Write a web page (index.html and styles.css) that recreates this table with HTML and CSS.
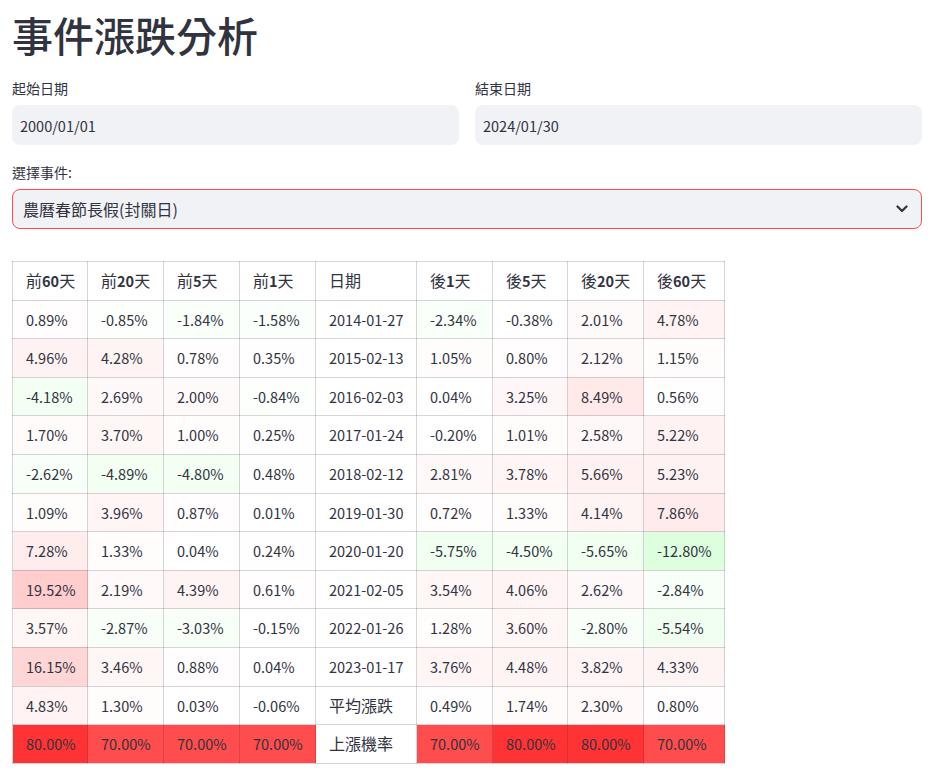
FILE: index.html
```html
<!DOCTYPE html>
<html lang="zh-Hant">
<head>
<meta charset="utf-8">
<title>事件漲跌分析</title>
<link rel="stylesheet" href="styles.css">
</head>
<body>
<main class="page">
  <h1 class="title">事件漲跌分析</h1>
  <div class="dates">
    <div class="field">
      <div class="label">起始日期</div>
      <div class="input"><span class="num">2000/01/01</span></div>
    </div>
    <div class="field">
      <div class="label">結束日期</div>
      <div class="input"><span class="num">2024/01/30</span></div>
    </div>
  </div>
  <div class="field select-field">
    <div class="label">選擇事件:</div>
    <div class="select">
      <span>農曆春節長假(封關日)</span>
      <svg class="chev" width="12" height="8" viewBox="0 0 12 8"><path d="M1.5 1.5 L6 6 L10.5 1.5" fill="none" stroke="#31333f" stroke-width="2.2" stroke-linecap="round" stroke-linejoin="round"/></svg>
    </div>
  </div>
  <table class="grid">
    <thead>
      <tr>
        <th class="w75">前<b>60</b>天</th>
        <th class="w76">前<b>20</b>天</th>
        <th class="w76">前<b>5</b>天</th>
        <th class="w76">前<b>1</b>天</th>
        <th class="w101">日期</th>
        <th class="w76">後<b>1</b>天</th>
        <th class="w75">後<b>5</b>天</th>
        <th class="w76">後<b>20</b>天</th>
        <th class="w81">後<b>60</b>天</th>
      </tr>
    </thead>
    <tbody>
      <tr>
        <td class="p" style="--a:.0089">0.89%</td><td class="n" style="--a:.0085">-0.85%</td><td class="n" style="--a:.0184">-1.84%</td><td class="n" style="--a:.0158">-1.58%</td>
        <td>2014-01-27</td>
        <td class="n" style="--a:.0234">-2.34%</td><td class="n" style="--a:.0038">-0.38%</td><td class="p" style="--a:.0201">2.01%</td><td class="p" style="--a:.0478">4.78%</td>
      </tr>
      <tr>
        <td class="p" style="--a:.0496">4.96%</td><td class="p" style="--a:.0428">4.28%</td><td class="p" style="--a:.0078">0.78%</td><td class="p" style="--a:.0035">0.35%</td>
        <td>2015-02-13</td>
        <td class="p" style="--a:.0105">1.05%</td><td class="p" style="--a:.0080">0.80%</td><td class="p" style="--a:.0212">2.12%</td><td class="p" style="--a:.0115">1.15%</td>
      </tr>
      <tr>
        <td class="n" style="--a:.0418">-4.18%</td><td class="p" style="--a:.0269">2.69%</td><td class="p" style="--a:.0200">2.00%</td><td class="n" style="--a:.0084">-0.84%</td>
        <td>2016-02-03</td>
        <td class="p" style="--a:.0004">0.04%</td><td class="p" style="--a:.0325">3.25%</td><td class="p" style="--a:.0849">8.49%</td><td class="p" style="--a:.0056">0.56%</td>
      </tr>
      <tr>
        <td class="p" style="--a:.0170">1.70%</td><td class="p" style="--a:.0370">3.70%</td><td class="p" style="--a:.0100">1.00%</td><td class="p" style="--a:.0025">0.25%</td>
        <td>2017-01-24</td>
        <td class="n" style="--a:.0020">-0.20%</td><td class="p" style="--a:.0101">1.01%</td><td class="p" style="--a:.0258">2.58%</td><td class="p" style="--a:.0522">5.22%</td>
      </tr>
      <tr>
        <td class="n" style="--a:.0262">-2.62%</td><td class="n" style="--a:.0489">-4.89%</td><td class="n" style="--a:.0480">-4.80%</td><td class="p" style="--a:.0048">0.48%</td>
        <td>2018-02-12</td>
        <td class="p" style="--a:.0281">2.81%</td><td class="p" style="--a:.0378">3.78%</td><td class="p" style="--a:.0566">5.66%</td><td class="p" style="--a:.0523">5.23%</td>
      </tr>
      <tr>
        <td class="p" style="--a:.0109">1.09%</td><td class="p" style="--a:.0396">3.96%</td><td class="p" style="--a:.0087">0.87%</td><td class="p" style="--a:.0001">0.01%</td>
        <td>2019-01-30</td>
        <td class="p" style="--a:.0072">0.72%</td><td class="p" style="--a:.0133">1.33%</td><td class="p" style="--a:.0414">4.14%</td><td class="p" style="--a:.0786">7.86%</td>
      </tr>
      <tr>
        <td class="p" style="--a:.0728">7.28%</td><td class="p" style="--a:.0133">1.33%</td><td class="p" style="--a:.0004">0.04%</td><td class="p" style="--a:.0024">0.24%</td>
        <td>2020-01-20</td>
        <td class="n" style="--a:.0575">-5.75%</td><td class="n" style="--a:.0450">-4.50%</td><td class="n" style="--a:.0565">-5.65%</td><td class="n" style="--a:.1280">-12.80%</td>
      </tr>
      <tr>
        <td class="p" style="--a:.1952">19.52%</td><td class="p" style="--a:.0219">2.19%</td><td class="p" style="--a:.0439">4.39%</td><td class="p" style="--a:.0061">0.61%</td>
        <td>2021-02-05</td>
        <td class="p" style="--a:.0354">3.54%</td><td class="p" style="--a:.0406">4.06%</td><td class="p" style="--a:.0262">2.62%</td><td class="n" style="--a:.0284">-2.84%</td>
      </tr>
      <tr>
        <td class="p" style="--a:.0357">3.57%</td><td class="n" style="--a:.0287">-2.87%</td><td class="n" style="--a:.0303">-3.03%</td><td class="n" style="--a:.0015">-0.15%</td>
        <td>2022-01-26</td>
        <td class="p" style="--a:.0128">1.28%</td><td class="p" style="--a:.0360">3.60%</td><td class="n" style="--a:.0280">-2.80%</td><td class="n" style="--a:.0554">-5.54%</td>
      </tr>
      <tr>
        <td class="p" style="--a:.1615">16.15%</td><td class="p" style="--a:.0346">3.46%</td><td class="p" style="--a:.0088">0.88%</td><td class="p" style="--a:.0004">0.04%</td>
        <td>2023-01-17</td>
        <td class="p" style="--a:.0376">3.76%</td><td class="p" style="--a:.0448">4.48%</td><td class="p" style="--a:.0382">3.82%</td><td class="p" style="--a:.0433">4.33%</td>
      </tr>
      <tr>
        <td class="p" style="--a:.0483">4.83%</td><td class="p" style="--a:.0130">1.30%</td><td class="p" style="--a:.0003">0.03%</td><td class="n" style="--a:.0006">-0.06%</td>
        <td class="cjk">平均漲跌</td>
        <td class="p" style="--a:.0049">0.49%</td><td class="p" style="--a:.0174">1.74%</td><td class="p" style="--a:.0230">2.30%</td><td class="p" style="--a:.0080">0.80%</td>
      </tr>
      <tr>
        <td class="p" style="--a:.80">80.00%</td><td class="p" style="--a:.70">70.00%</td><td class="p" style="--a:.70">70.00%</td><td class="p" style="--a:.70">70.00%</td>
        <td class="cjk">上漲機率</td>
        <td class="p" style="--a:.70">70.00%</td><td class="p" style="--a:.80">80.00%</td><td class="p" style="--a:.80">80.00%</td><td class="p" style="--a:.70">70.00%</td>
      </tr>
    </tbody>
  </table>
</main>
</body>
</html>
```

FILE: styles.css
```css
html, body {
  margin: 0;
  padding: 0;
  background: #ffffff;
}

body {
  font-family: "Noto Sans CJK TC", "Noto Sans", sans-serif;
  color: rgb(49, 51, 63);
  font-size: 16px;
}

.page {
  padding: 10px 11px 0 12px;
  display: flex;
  flex-direction: column;
}

.title {
  margin: 0;
  font-size: 41px;
  line-height: 48px;
  font-weight: 500;
  letter-spacing: 0;
}

.dates {
  margin-top: 20px;
  display: grid;
  grid-template-columns: 1fr 1fr;
  gap: 16px;
}

.field {
  display: flex;
  flex-direction: column;
}

.label {
  font-size: 14px;
  line-height: 21px;
  height: 21px;
  margin-bottom: 6px;
}

.input {
  height: 40px;
  box-sizing: border-box;
  background: #f0f2f6;
  border-radius: 8px;
  padding: 0 8px;
  display: flex;
  align-items: center;
  font-size: 16px;
}

.num {
  font-size: 14.5px;
}

.select-field {
  margin-top: 17px;
}

.select {
  height: 40px;
  box-sizing: border-box;
  background: #f0f2f6;
  border: 1px solid rgb(255, 75, 75);
  border-radius: 8px;
  padding: 0 13px 0 10px;
  display: flex;
  align-items: center;
  justify-content: space-between;
  font-size: 16px;
}

.chev {
  display: block;
}

.grid {
  margin-top: 32px;
  border-collapse: collapse;
  table-layout: fixed;
  width: 713px;
  font-size: 16px;
}

.grid th,
.grid td {
  box-sizing: border-box;
  border: 1px solid rgba(49, 51, 63, 0.2);
  padding: 6px 13px;
  height: 38.6px;
  line-height: 25.6px;
  text-align: left;
  white-space: nowrap;
  font-weight: 400;
  color: rgb(49, 51, 63);
  font-size: 14.5px;
}

.grid th {
  font-size: 16px;
}

.grid th b {
  font-weight: 700;
  font-size: 14.5px;
}

.grid td.cjk {
  font-size: 16px;
}

.w76 { width: 76px; }
.w75 { width: 75px; }
.w101 { width: 101px; }
.w81 { width: 81px; }

.p { background: rgba(255, 0, 0, var(--a)); }
.n { background: rgba(0, 255, 0, var(--a)); }
```
